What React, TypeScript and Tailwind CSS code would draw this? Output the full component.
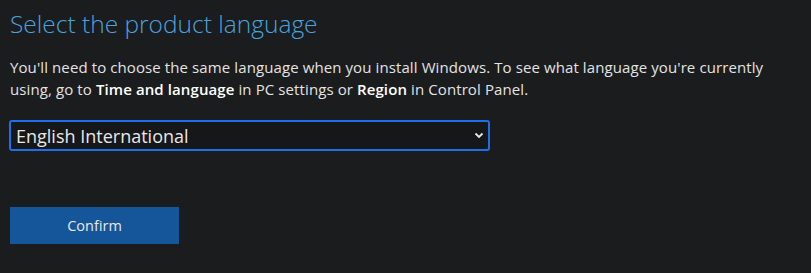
import React from "react";

export default function App() {
  return (
    <div
      className="w-[811px] h-[273px] bg-[#1b1c1e] px-[10px] overflow-hidden"
      style={{ fontFamily: '"Open Sans", "Noto Sans", sans-serif' }}
    >
      <h1 className="pt-[6px] text-[24.5px] leading-[36px] font-light text-[#4aa3df]">
        Select the product language
      </h1>
      <p className="mt-[14px] text-[15px] tracking-[0.1px] leading-[22px] text-[#e3e3e3] w-[772px]">
        You'll need to choose the same language when you install Windows. To see what language you're currently
        using, go to <b className="font-semibold text-white">Time and language</b> in PC settings or{" "}
        <b className="font-semibold text-white">Region</b> in Control Panel.
      </p>
      <div className="mt-[20px] ml-[-1px] w-[481px] h-[31px] rounded-[3px] border-2 border-[#1f6feb] bg-[#161719] flex items-center justify-between pl-[5px] pr-[4px]">
        <span className="text-[18px] text-[#e8e8e8] leading-none">English International</span>
        <svg width="10" height="7" viewBox="0 0 10 7" fill="none">
          <path d="M1.5 1.5 L5 5 L8.5 1.5" stroke="#e8e8e8" strokeWidth="1.8" />
        </svg>
      </div>
      <button className="mt-[56px] w-[169px] h-[37px] bg-[#15569a] text-[14.5px] text-[#e8e8e8] flex items-center justify-center">
        Confirm
      </button>
    </div>
  );
}
